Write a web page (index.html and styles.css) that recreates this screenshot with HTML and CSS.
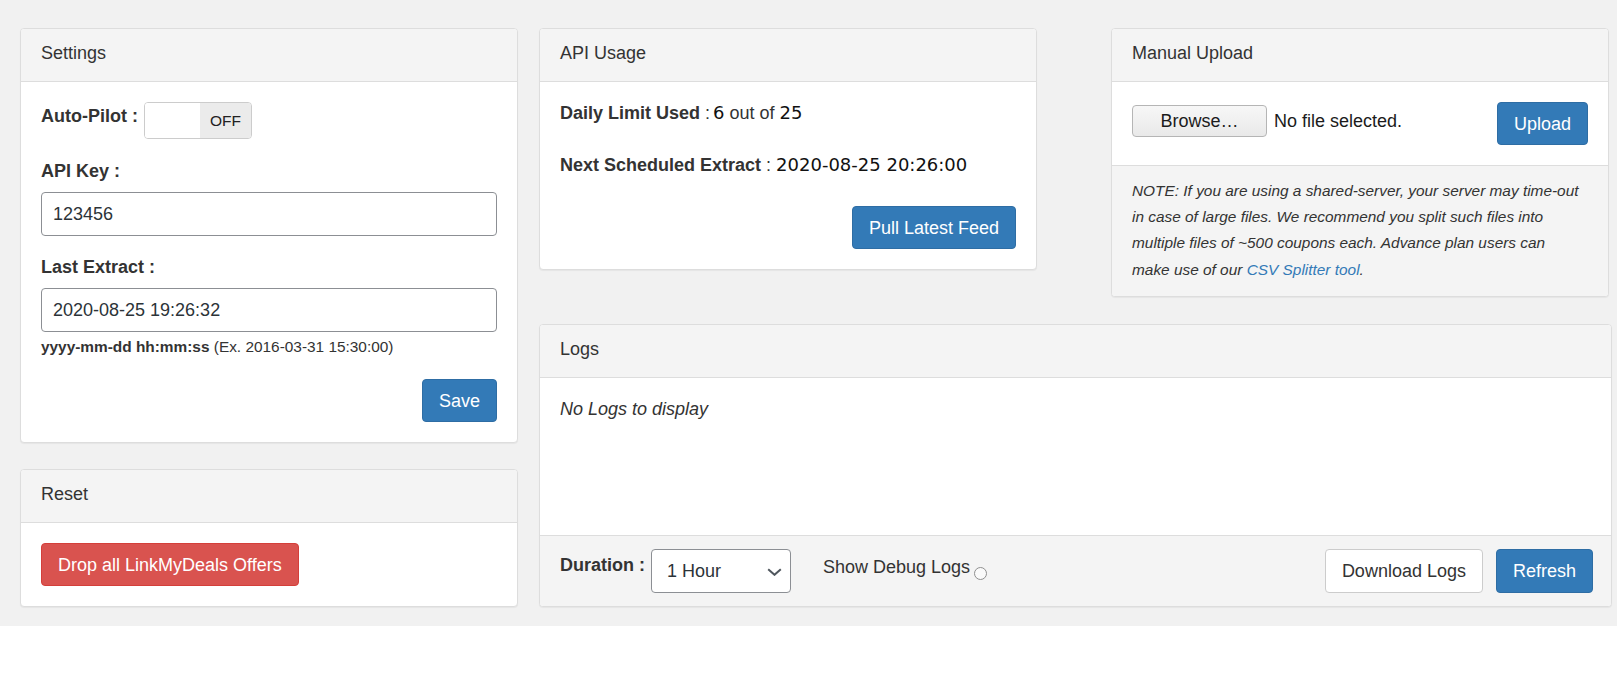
FILE: index.html
```html
<!DOCTYPE html>
<html lang="en">
<head>
<meta charset="utf-8">
<title>LinkMyDeals</title>
<link rel="stylesheet" href="styles.css">
</head>
<body>
<div class="wrap">
  <div class="col-left">
    <div class="panel">
      <div class="panel-heading">Settings</div>
      <div class="panel-body">
        <div class="autopilot">
          <span class="lbl-inline">Auto-Pilot :</span>
          <span class="toggle"><span class="toggle-handle"></span><span class="toggle-off">OFF</span></span>
        </div>
        <div class="form-group">
          <div class="lbl">API Key :</div>
          <input class="form-control" type="text" value="123456">
        </div>
        <div class="form-group last">
          <div class="lbl">Last Extract :</div>
          <input class="form-control" type="text" value="2020-08-25 19:26:32">
          <div class="help"><b>yyyy-mm-dd hh:mm:ss</b> (Ex. 2016-03-31 15:30:00)</div>
        </div>
        <div class="actions">
          <button class="btn btn-primary">Save</button>
        </div>
      </div>
    </div>
    <div class="panel reset">
      <div class="panel-heading">Reset</div>
      <div class="panel-body">
        <button class="btn btn-danger">Drop all LinkMyDeals Offers</button>
      </div>
    </div>
  </div>

  <div class="col-right">
    <div class="top-row">
      <div class="panel half">
        <div class="panel-heading">API Usage</div>
        <div class="panel-body usage">
          <p class="line"><b>Daily Limit Used</b> :<span class="num first">6</span> out of <span class="num">25</span></p>
          <p class="line second"><b>Next Scheduled Extract</b> : <span class="num">2020-08-25 20:26:00</span></p>
          <div class="actions pull">
            <button class="btn btn-primary">Pull Latest Feed</button>
          </div>
        </div>
      </div>
      <div class="panel half">
        <div class="panel-heading">Manual Upload</div>
        <div class="panel-body upload">
          <div class="file">
            <span class="browse">Browse…</span>
            <span class="file-name">No file selected.</span>
          </div>
          <button class="btn btn-primary">Upload</button>
        </div>
        <div class="panel-footer note">
          NOTE: If you are using a shared-server, your server may time-out in case of large files. We recommend you split such files into multiple files of ~500 coupons each. Advance plan users can make use of our <a href="#">CSV Splitter tool</a>.
        </div>
      </div>
    </div>

    <div class="panel logs">
      <div class="panel-heading">Logs</div>
      <div class="panel-body logs-body"><em>No Logs to display</em></div>
      <div class="panel-footer logs-footer">
        <div class="footer-left">
          <span class="duration-lbl">Duration :</span>
          <span class="select-wrap">
            <select class="select">
              <option>1 Hour</option>
              <option>6 Hours</option>
              <option>24 Hours</option>
            </select>
            <svg class="chev" width="15" height="8" viewBox="0 0 15 8"><path d="M1.2 1.2 L7.5 6.8 L13.8 1.2" fill="none" stroke="#50575e" stroke-width="2"/></svg>
          </span>
          <span class="debug">Show Debug Logs<span class="radio"></span></span>
        </div>
        <div class="footer-right">
          <button class="btn btn-default">Download Logs</button>
          <button class="btn btn-primary">Refresh</button>
        </div>
      </div>
    </div>
  </div>
</div>
</body>
</html>
```

FILE: styles.css
```css
* { box-sizing: border-box; }
html, body { margin: 0; padding: 0; background: #fff; }
body {
  font-family: "Liberation Sans", Arial, sans-serif;
  font-size: 18px;
  color: #333;
}

.wrap {
  background: #f1f1f1;
  padding: 28px 5px 19px 20px;
  display: grid;
  grid-template-columns: 498px 1073px;
  column-gap: 21px;
  align-items: start;
}

.col-left { display: flex; flex-direction: column; gap: 26px; }
.col-right { display: flex; flex-direction: column; gap: 27px; }
.top-row { display: flex; gap: 74px; align-items: flex-start; }
.half { width: 498px; }

.panel {
  background: #fff;
  border: 1px solid #ddd;
  border-radius: 4px;
  box-shadow: 0 1px 1px rgba(0,0,0,0.05);
  overflow: hidden;
}
.panel-heading {
  background: #f4f4f4;
  border-bottom: 1px solid #ddd;
  padding: 12px 20px 15px;
  line-height: 25px;
  font-size: 18px;
  color: #333;
}
.panel-body { padding: 20px; }
.panel-footer {
  background: #f4f4f4;
  border-top: 1px solid #ddd;
}

/* settings */
.autopilot { display: flex; align-items: flex-start; height: 37px; margin-bottom: 20px; }
.lbl-inline { font-weight: bold; line-height: 25px; margin-top: 2px; }
.toggle {
  display: flex;
  width: 108px;
  height: 37px;
  margin-left: 6px;
  border: 1px solid #ccc;
  border-radius: 4px;
  overflow: hidden;
}
.toggle-handle { flex: 0 0 55px; background: #fff; }
.toggle-off {
  flex: 1;
  background: #ebebeb;
  font-size: 15.5px;
  display: flex;
  align-items: center;
  justify-content: center;
  color: #222;
}
.lbl { font-weight: bold; line-height: 25px; margin-bottom: 8px; }
.form-group { margin-bottom: 19px; }
.form-group.last { margin-bottom: 0; }
.form-control {
  display: block;
  width: 100%;
  height: 44px;
  margin: 0;
  padding: 0 11px;
  border: 1px solid #8c8f94;
  border-radius: 4px;
  font-family: "Liberation Sans", Arial, sans-serif;
  font-size: 18px;
  color: #2c3338;
  background: #fff;
}
.help { font-size: 15.4px; line-height: 22px; margin-top: 4px; color: #333; }
.actions { display: flex; justify-content: flex-end; margin-top: 21px; }

/* buttons */
.btn {
  display: inline-flex;
  align-items: center;
  justify-content: center;
  height: 43px;
  padding: 0 16px;
  border: 1px solid transparent;
  border-radius: 4px;
  font-family: "Liberation Sans", Arial, sans-serif;
  font-size: 18px;
  line-height: 1;
  cursor: pointer;
  margin: 0;
}
.btn-primary { background: #337ab7; border-color: #2e6da4; color: #fff; }
.btn-danger { background: #d9534f; border-color: #d43f3a; color: #fff; }
.btn-default { background: #fff; border-color: #ccc; color: #333; }

/* usage */
.usage { padding-top: 18px; }
.line { margin: 0; line-height: 26px; }
.line.second { margin-top: 26px; }
.num { font-family: "DejaVu Sans", sans-serif; color: #111; }
.num.first { margin-left: 3px; }
.actions.pull { margin-top: 28px; }

/* upload */
.upload { display: flex; justify-content: space-between; align-items: flex-start; }
.file { display: flex; align-items: center; margin-top: 3px; }
.browse {
  display: inline-flex;
  align-items: center;
  justify-content: center;
  width: 135px;
  height: 32px;
  border: 1px solid #b5b5b5;
  border-radius: 4px;
  background: linear-gradient(#f7f7f7, #e9e9e9);
  color: #1b1b1b;
  font-size: 18px;
}
.file-name { margin-left: 7px; color: #1b1b1b; }
.note {
  padding: 12px 26px 13px 20px;
  font-size: 15.4px;
  line-height: 26.2px;
  font-style: italic;
  color: #333;
}
.note a { color: #337ab7; text-decoration: none; }

/* logs */
.logs-body { height: 157px; line-height: 26px; padding-top: 18px; }
.logs-body em { font-style: italic; }
.logs-footer {
  display: flex;
  justify-content: space-between;
  align-items: flex-start;
  padding: 13px 18px 13px 20px;
}
.footer-left { display: flex; align-items: flex-start; }
.duration-lbl { font-weight: bold; line-height: 25px; margin-top: 4px; }
.select-wrap { position: relative; margin-left: 6px; display: block; }
.select {
  display: block;
  width: 140px;
  height: 44px;
  margin: 0;
  padding: 0 28px 0 15px;
  border: 1px solid #8c8f94;
  border-radius: 4px;
  background: #fff;
  font-family: "Liberation Sans", Arial, sans-serif;
  font-size: 18px;
  color: #2c3338;
  -webkit-appearance: none;
  appearance: none;
}
.chev { position: absolute; right: 9px; top: 19px; pointer-events: none; }
.debug {
  display: flex;
  align-items: flex-start;
  margin-left: 32px;
  margin-top: 6px;
  line-height: 25px;
}
.radio {
  display: block;
  width: 13px;
  height: 13px;
  margin-left: 4px;
  margin-top: 12px;
  border: 1px solid #8f8f8f;
  border-radius: 50%;
  background: #fafafa;
}
.footer-right { display: flex; gap: 13px; }
.footer-right .btn { height: 44px; }
```
